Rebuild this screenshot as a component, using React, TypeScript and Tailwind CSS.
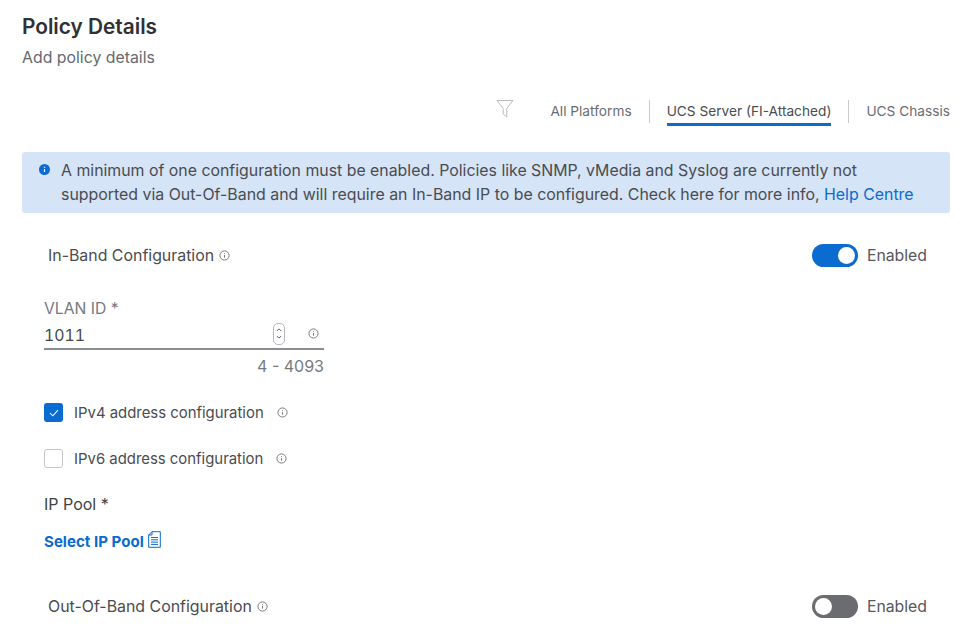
import React from 'react';

const InfoIcon = ({ className = '' }: { className?: string }) => (
  <svg viewBox="0 0 12 12" className={`w-[11px] h-[11px] shrink-0 ${className}`} fill="none" stroke="#6e7175" strokeWidth="1">
    <circle cx="6" cy="6" r="5" />
    <path d="M6 5.4v3" />
    <path d="M6 3.4v.9" />
  </svg>
);

const Toggle = ({ on }: { on: boolean }) => (
  <div className={`w-[46px] h-[23px] rounded-full flex items-center px-[3px] ${on ? 'bg-[#0a6bd0] justify-end' : 'bg-[#6a6c6f] justify-start'}`}>
    <div className="w-[17px] h-[17px] rounded-full bg-white" />
  </div>
);

const ConfigRow = ({ label, on }: { label: string; on: boolean }) => (
  <div className="flex items-center justify-between pl-[26px] pr-[23px]">
    <div className="flex items-center gap-[5px] text-[15.9px] text-[#4a4c50]">
      {label} <InfoIcon />
    </div>
    <div className="flex items-center gap-[9px] text-[15.8px] text-[#55585c]">
      <Toggle on={on} />
      <span>Enabled</span>
    </div>
  </div>
);

const App: React.FC = () => {
  return (
    <div className="w-[966px] h-[640px] overflow-hidden bg-white pl-[22px] pr-[16px] pt-[15px] font-['Inter',sans-serif]">
      <h1 className="text-[20.8px] leading-[24px] font-semibold text-[#2f3135]">Policy Details</h1>
      <p className="mt-[7px] text-[15.85px] leading-[24px] text-[#66696d]">Add policy details</p>

      {/* Platform tabs */}
      <div className="mt-[30px] h-[29px] flex items-start justify-end text-[13.7px] text-[#6a6d71]">
        <svg viewBox="0 0 18 20" className="w-[18px] h-[20px] mr-[36px] mt-[-1px]" fill="none" stroke="#b9bbbe" strokeWidth="1">
          <path d="M1 1.5h16l-6.2 8v8.5l-3.6-3v-5.5z" />
        </svg>
        <span className="leading-[22px]">All Platforms</span>
        <div className="w-px h-[23px] bg-[#c9cacc] mx-[17px]" />
        <span className="leading-[22px] text-[#4a4d51] border-b-[3px] border-[#0a6bd0] h-[26px]">UCS Server (FI-Attached)</span>
        <div className="w-px h-[23px] bg-[#c9cacc] mx-[17px]" />
        <span className="leading-[22px]">UCS Chassis</span>
      </div>

      {/* Notice */}
      <div className="mt-[23px] h-[61px] rounded-[3px] bg-[#d5e4f7] pl-[17px] pt-[7px] flex items-start gap-[11px]">
        <svg viewBox="0 0 12 12" className="w-[11px] h-[11px] mt-[5px] shrink-0">
          <circle cx="6" cy="6" r="6" fill="#0a6bd0" />
          <path d="M6 5.4v3.2M6 3v1.2" stroke="#fff" strokeWidth="1.4" />
        </svg>
        <p className="text-[15.86px] leading-[24px] text-[#4a4c50] whitespace-nowrap">
          A minimum of one configuration must be enabled. Policies like SNMP, vMedia and Syslog are currently not<br />
          <span className="text-[15.9px]">supported via Out-Of-Band and will require an In-Band IP to be configured. Check here for more info, <span className="text-[#0a6bd0]">Help Centre</span></span>
        </p>
      </div>

      <div className="mt-[31px]">
        <ConfigRow label="In-Band Configuration" on />
      </div>

      {/* VLAN field */}
      <div className="mt-[31px] ml-[22px] w-[280px]">
        <div className="text-[15.7px] leading-[20px] text-[#77797d]">VLAN ID *</div>
        <div className="mt-[5px] h-[26px] flex items-center justify-between border-b-2 border-[#8b8d90] text-[15.8px] text-[#45474b]">
          <span className="tabular-nums">1011</span>
          <div className="flex items-center gap-[23px] pr-[5px] mt-[-4px]">
            <div className="w-[12px] h-[22px] border border-[#b5b7ba] rounded-[5px] flex flex-col items-center justify-center gap-[3px]">
              <svg viewBox="0 0 8 5" className="w-[6px] h-[4px]" fill="none" stroke="#505256" strokeWidth="1.2"><path d="M1 4l3-3 3 3" /></svg>
              <svg viewBox="0 0 8 5" className="w-[6px] h-[4px]" fill="none" stroke="#505256" strokeWidth="1.2"><path d="M1 1l3 3 3-3" /></svg>
            </div>
            <InfoIcon />
          </div>
        </div>
        <div className="mt-[6px] text-right text-[16px] leading-[20px] text-[#77797d]">4 - 4093</div>
      </div>

      {/* Address checkboxes */}
      <div className="mt-[27px] ml-[22px] flex items-center gap-[11px] h-[20px] text-[14.9px] text-[#4a4c50]">
        <div className="w-[19px] h-[19px] rounded-[3px] bg-[#0a6bd0] flex items-center justify-center">
          <svg viewBox="0 0 12 10" className="w-[10px] h-[8px]" fill="none" stroke="#fff" strokeWidth="1.3"><path d="M1 5l3.5 3.5L11 1.5" /></svg>
        </div>
        <span>IPv4 address configuration</span>
        <InfoIcon className="ml-[2px]" />
      </div>
      <div className="mt-[26px] ml-[22px] flex items-center gap-[11px] h-[20px] text-[14.9px] text-[#4a4c50]">
        <div className="w-[19px] h-[19px] rounded-[3px] border border-[#c4c5c8] bg-white" />
        <span>IPv6 address configuration</span>
        <InfoIcon className="ml-[2px]" />
      </div>

      <div className="mt-[25px] ml-[22px] text-[16px] leading-[20px] text-[#404246]">IP Pool *</div>
      <div className="mt-[18px] ml-[22px] flex items-start gap-[4px] h-[20px]">
        <span className="text-[15.1px] leading-[20px] font-bold text-[#0a6bd0]">Select IP Pool</span>
        <svg viewBox="0 0 13 17" className="w-[13px] h-[17px] mt-[-1px]" fill="none" stroke="#0a6bd0" strokeWidth="1">
          <path d="M4 .7h8.3v15.6H.7V4z" />
          <path d="M4 .7V4H.7" />
          <path d="M3 6.5h7M3 8.8h7M3 11.1h7M3 13.4h7" />
        </svg>
      </div>

      <div className="mt-[43px]">
        <ConfigRow label="Out-Of-Band Configuration" on={false} />
      </div>
    </div>
  );
};

export default App;
